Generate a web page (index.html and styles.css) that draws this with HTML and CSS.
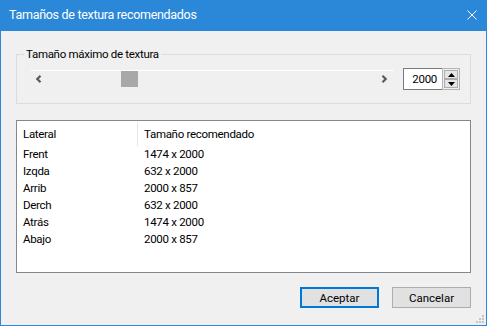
FILE: index.html
```html
<!DOCTYPE html>
<html lang="es">
<head>
  <meta charset="UTF-8" />
  <title>Tamaños de textura recomendados</title>
  <link rel="stylesheet" href="styles.css">
</head>
<body>
  <div class="window">
    <div class="titlebar">
      <span class="title">Tamaños de textura recomendados</span>
      <svg class="close" width="10" height="10" viewBox="0 0 10 10">
        <path d="M0.5 0.5 L9.5 9.5 M9.5 0.5 L0.5 9.5" stroke="#fff" stroke-width="1" fill="none"/>
      </svg>
    </div>

    <div class="content">
      <fieldset class="group">
        <legend>Tamaño máximo de textura</legend>
        <div class="slider-row">
          <div class="slider">
            <svg class="arrow" width="7" height="8" viewBox="0 0 7 8">
              <path d="M5.5 0.8 L2.3 4 L5.5 7.2" stroke="#5a5a5a" stroke-width="2.2" fill="none"/>
            </svg>
            <div class="thumb"></div>
            <svg class="arrow arrow-right" width="7" height="8" viewBox="0 0 7 8">
              <path d="M1.5 0.8 L4.7 4 L1.5 7.2" stroke="#5a5a5a" stroke-width="2.2" fill="none"/>
            </svg>
          </div>
          <div class="spin">
            <div class="spin-value">2000</div>
            <div class="spin-buttons">
              <div class="spin-btn">
                <svg width="7" height="4" viewBox="0 0 7 4"><path d="M0 4 L3.5 0 L7 4 Z" fill="#000"/></svg>
              </div>
              <div class="spin-btn">
                <svg width="7" height="4" viewBox="0 0 7 4"><path d="M0 0 L3.5 4 L7 0 Z" fill="#000"/></svg>
              </div>
            </div>
          </div>
        </div>
      </fieldset>

      <div class="list">
        <div class="list-head">
          <div class="col col-side">Lateral</div>
          <div class="col">Tamaño recomendado</div>
        </div>
        <div class="row"><div class="col col-side">Frent</div><div class="col">1474 x 2000</div></div>
        <div class="row"><div class="col col-side">Izqda</div><div class="col">632 x 2000</div></div>
        <div class="row"><div class="col col-side">Arrib</div><div class="col">2000 x 857</div></div>
        <div class="row"><div class="col col-side">Derch</div><div class="col">632 x 2000</div></div>
        <div class="row"><div class="col col-side">Atrás</div><div class="col">1474 x 2000</div></div>
        <div class="row"><div class="col col-side">Abajo</div><div class="col">2000 x 857</div></div>
      </div>

      <div class="actions">
        <button class="btn btn-default">Aceptar</button>
        <button class="btn">Cancelar</button>
      </div>
    </div>

    <svg class="grip" width="8" height="8" viewBox="0 0 8 8">
      <rect x="6" y="0" width="2" height="2" fill="#c4c4c4"/>
      <rect x="3" y="3" width="2" height="2" fill="#c4c4c4"/>
      <rect x="6" y="3" width="2" height="2" fill="#c4c4c4"/>
      <rect x="0" y="6" width="2" height="2" fill="#c4c4c4"/>
      <rect x="3" y="6" width="2" height="2" fill="#c4c4c4"/>
      <rect x="6" y="6" width="2" height="2" fill="#c4c4c4"/>
    </svg>
  </div>
</body>
</html>
```

FILE: styles.css
```css
* { box-sizing: border-box; }
body {
  margin: 0;
  font-family: Roboto, 'Liberation Sans', sans-serif;
  font-size: 11.5px;
  letter-spacing: -0.3px;
  color: #000;
  background: #fff;
}
.window {
  position: relative;
  width: 487px;
  height: 326px;
  background: #f0f0f0;
  border: 1px solid #2b88d8;
  border-top: none;
}
.titlebar {
  height: 31px;
  margin: 0 -1px;
  background: #2b88d8;
  color: #fff;
  display: flex;
  align-items: center;
  justify-content: space-between;
  padding: 0 10px 0 9px;
}
.title {
  font-size: 12.5px;
  line-height: 18px;
  margin-top: -1px;
}
.close { display: block; margin-top: -1px; }
.content {
  padding: 15px 15px 0;
}
.group {
  margin: 0;
  padding: 0 10px 13px 14px;
  border: 1px solid #dcdcdc;
  min-width: 0;
}
.group legend {
  margin-left: -7px;
  padding: 0 2px;
  line-height: 16px;
}
.slider-row {
  display: flex;
  align-items: flex-start;
  gap: 9px;
  padding-top: 6px;
}
.slider {
  width: 363px;
  height: 18px;
  margin-top: 2px;
  border-top: 1px solid #fff;
  display: flex;
  align-items: flex-start;
  padding: 0 6px 0 4px;
}
.arrow {
  display: block;
  margin-top: 4px;
}
.thumb {
  width: 17px;
  height: 16px;
  margin-left: 79px;
  background: #a8a8a8;
}
.arrow-right { margin-left: auto; }
.spin {
  display: flex;
  height: 22px;
}
.spin-value {
  width: 39px;
  border: 1px solid #7a7a7a;
  border-right: none;
  background: #fff;
  text-align: right;
  padding-right: 5px;
  line-height: 20px;
}
.spin-buttons {
  width: 18px;
  border: 1px solid #b4b4b4;
  background: #f0f0f0;
  display: flex;
  flex-direction: column;
  justify-content: space-between;
  padding: 1px 0 1px 1px;
}
.spin-btn {
  height: 9px;
  width: 14px;
  border: 1px solid #adadad;
  background: #e5e5e5;
  display: flex;
  align-items: center;
  justify-content: center;
}
.spin-btn svg { display: block; }
.list {
  margin-top: 16px;
  height: 153px;
  background: #fff;
  border: 1px solid #828790;
}
.list-head, .row {
  display: flex;
}
.list-head {
  height: 25px;
  align-items: center;
}
.list-head .col-side {
  border-right: 1px solid #e5e5e5;
  height: 24px;
  line-height: 24px;
}
.row {
  height: 17px;
  line-height: 17px;
}
.col {
  padding-left: 6px;
}
.col-side {
  width: 121px;
  padding-left: 6px;
}
.actions {
  display: flex;
  justify-content: flex-end;
  gap: 13px;
  margin-top: 14px;
}
.btn {
  width: 79px;
  height: 21px;
  font: inherit;
  color: #000;
  background: #e1e1e1;
  border: 1px solid #adadad;
  padding: 0;
}
.btn-default {
  border: 2px solid #0078d7;
}
.grip {
  position: absolute;
  right: 2px;
  bottom: 2px;
}
```
